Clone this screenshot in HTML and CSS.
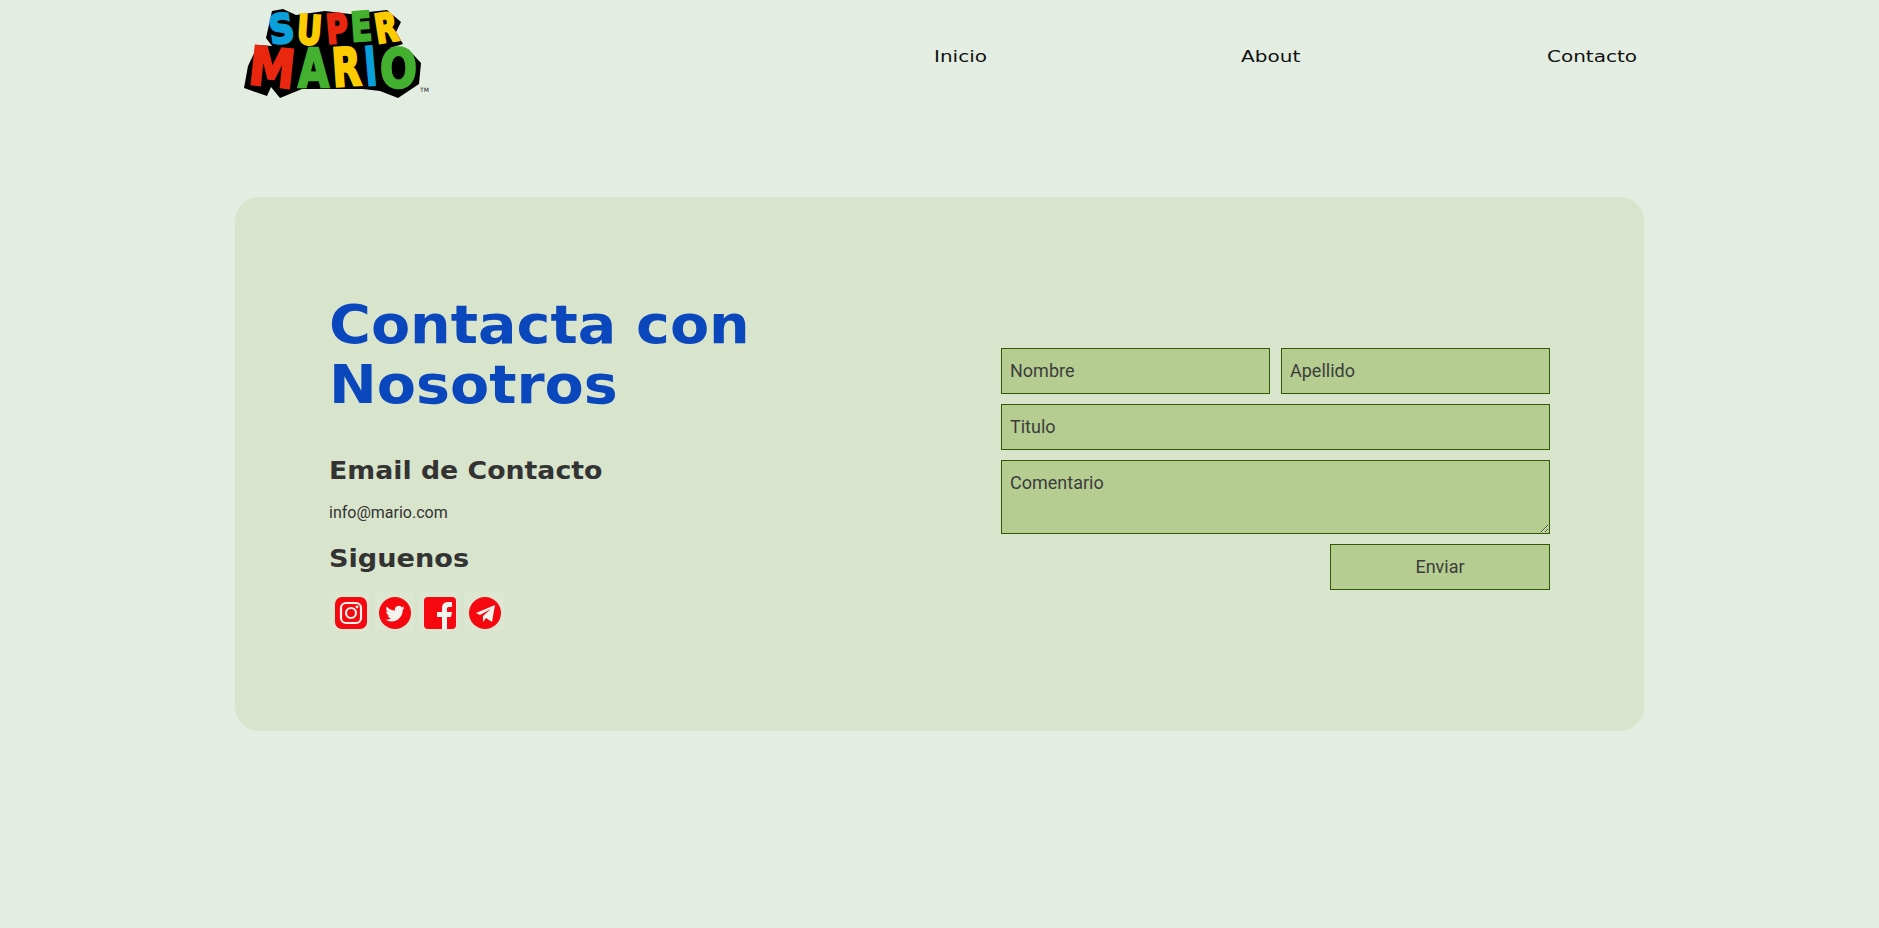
FILE: index.html
```html
<!DOCTYPE html>
<html>
  <head>
    <meta charset="utf-8" />
    <title>Contacto - Super Mario</title>
    <link rel="stylesheet" href="styles.css">
  </head>
  <body>
    <div id="main">
      <header class="top">
        <a class="logo" href="#">
          <svg width="205" height="110" viewBox="5 0 205 110">
            <polygon class="logo-back" points="42,11 53,9 66,15 95,11 120,14 157,10 171,22 166,32 173,44 160,48 178,49 191,63 189,84 168,98 150,91 133,89 110,89 72,89 50,98 41,87 37,96 14,88 18,66 28,45 42,46 36,38" />
            <g class="logo-front">
              <text class="blue" x="39" y="43" textLength="25" lengthAdjust="spacingAndGlyphs" transform="rotate(-8 50 30)">S</text>
              <text class="yellow" x="67" y="44" textLength="25" lengthAdjust="spacingAndGlyphs" transform="rotate(4 78 30)">U</text>
              <text class="red" x="96" y="43" textLength="22" lengthAdjust="spacingAndGlyphs" transform="rotate(-5 105 30)">P</text>
              <text class="green" x="121" y="41" textLength="21" lengthAdjust="spacingAndGlyphs" transform="rotate(-4 130 30)">E</text>
              <text class="yellow" x="145" y="42" textLength="23" lengthAdjust="spacingAndGlyphs" transform="rotate(-9 155 30)">R</text>
              <text class="big red" x="19" y="86" textLength="46" lengthAdjust="spacingAndGlyphs" transform="rotate(6 40 70)">M</text>
              <text class="big green" x="68" y="87" textLength="31" lengthAdjust="spacingAndGlyphs">A</text>
              <text class="big yellow" x="102" y="86" textLength="29" lengthAdjust="spacingAndGlyphs" transform="rotate(-4 115 70)">R</text>
              <text class="big blue" x="135" y="85" textLength="12" lengthAdjust="spacingAndGlyphs" transform="rotate(-5 140 70)">I</text>
              <text class="big green" x="150" y="87" textLength="37" lengthAdjust="spacingAndGlyphs">O</text>
            </g>
            <text class="tm" x="190" y="92">TM</text>
          </svg>
        </a>
        <nav class="menu">
          <a href="#">Inicio</a>
          <a href="#">About</a>
          <a href="#">Contacto</a>
        </nav>
      </header>

      <section class="card">
        <div class="info">
          <h1>Contacta con Nosotros</h1>
          <h3>Email de Contacto</h3>
          <p>info@mario.com</p>
          <h4>Siguenos</h4>
          <div class="social">
            <a href="#">
              <svg width="40" height="40" viewBox="0 0 40 40">
                <rect class="tile" width="40" height="40" />
                <rect class="red-fill" x="6" y="6" width="32" height="32" rx="7" />
                <rect class="white-line" x="12" y="12" width="20" height="20" rx="5" />
                <circle class="white-line" cx="22" cy="22" r="5" />
                <circle class="white-fill" cx="28" cy="16" r="1.4" />
              </svg>
            </a>
            <a href="#">
              <svg width="40" height="40" viewBox="0 0 40 40">
                <rect class="tile" width="40" height="40" />
                <circle class="red-fill" cx="21" cy="22" r="16" />
                <path class="white-fill" transform="translate(11.500 12.500) scale(1.2)" d="M5.026 15c6.038 0 9.341-5.003 9.341-9.334 0-.14 0-.282-.006-.422A6.685 6.685 0 0 0 16 3.542a6.658 6.658 0 0 1-1.889.518 3.301 3.301 0 0 0 1.447-1.817 6.533 6.533 0 0 1-2.087.793A3.286 3.286 0 0 0 7.875 6.03a9.325 9.325 0 0 1-6.767-3.429 3.289 3.289 0 0 0 1.018 4.382A3.323 3.323 0 0 1 .64 6.575v.045a3.288 3.288 0 0 0 2.632 3.218 3.203 3.203 0 0 1-.865.115 3.23 3.23 0 0 1-.614-.057 3.283 3.283 0 0 0 3.067 2.277A6.588 6.588 0 0 1 .78 13.58a6.32 6.32 0 0 1-.78-.045A9.344 9.344 0 0 0 5.026 15z" />
              </svg>
            </a>
            <a href="#">
              <svg width="40" height="40" viewBox="0 0 40 40">
                <rect class="tile" width="40" height="40" />
                <rect class="red-fill" x="5" y="6" width="32" height="32" rx="4" />
                <path class="white-fill" d="M23 38V26h-5v-5h5v-4c0-4 2.500-6 6-6h4v5h-3c-1.500 0-2 .7-2 2v3h5l-1 5h-4v12z" />
              </svg>
            </a>
            <a href="#">
              <svg width="40" height="40" viewBox="0 0 40 40">
                <rect class="tile" width="40" height="40" />
                <circle class="red-fill" cx="21" cy="22" r="16" />
                <path class="white-fill" d="M12 22l19-8-3 17-6-4-3 4v-6l8-7-11 6z" />
              </svg>
            </a>
          </div>
        </div>

        <form class="contact">
          <div class="row">
            <input type="text" placeholder="Nombre" />
            <input type="text" placeholder="Apellido" />
          </div>
          <input type="text" placeholder="Titulo" />
          <textarea placeholder="Comentario"></textarea>
          <div class="actions">
            <button type="button">Enviar</button>
          </div>
        </form>
      </section>
    </div>
  </body>
</html>
```

FILE: styles.css
```css
body {
  margin: 0;
  min-height: 928px;
  background-color: #e3ede1;
  color: #333;
  font: 16px Roboto, sans-serif;
}
#main {
  width: 1409px;
  margin: 0 auto;
}
.top {
  display: flex;
  justify-content: space-between;
  height: 110px;
  margin-bottom: 87px;
}
.logo {
  display: block;
  height: 110px;
}
.logo text {
  font-family: "DejaVu Sans", sans-serif;
  font-weight: bold;
  font-size: 40px;
}
.logo text.big {
  font-size: 53px;
}
.logo text.tm {
  font-size: 6px;
  font-weight: normal;
  fill: #222;
}
.logo-back {
  fill: #000;
}
.logo-front text {
  stroke-width: 2.500px;
  stroke-linejoin: miter;
}
.logo-front .blue { fill: #0b9fdc; stroke: #0b9fdc; }
.logo-front .yellow { fill: #fdcc00; stroke: #fdcc00; }
.logo-front .red { fill: #e9270f; stroke: #e9270f; }
.logo-front .green { fill: #43b02f; stroke: #43b02f; }
.menu {
  display: flex;
  justify-content: space-between;
  width: 703px;
  margin-right: 7px;
  padding-top: 47px;
  font: 16px "DejaVu Sans", sans-serif;
}
.menu a {
  display: block;
  height: 20px;
  color: #111;
  text-decoration: none;
  transform: scaleX(1.25);
}
.menu a:first-child {
  transform-origin: left;
}
.menu a:last-child {
  transform-origin: right;
}
.card {
  display: flex;
  justify-content: space-between;
  align-items: flex-start;
  height: 534px;
  box-sizing: border-box;
  padding: 94px;
  background-color: #d8e4cb;
  border-radius: 24px;
}
.info {
  width: 480px;
}
.info h1, .info h3, .info h4 {
  transform-origin: left;
}
.info h1 {
  margin: 4px 0 0;
  font: bold 53px/60px "DejaVu Sans", sans-serif;
  color: #0a47bd;
  transform: scaleX(1.077);
}
.info h3 {
  margin: 40px 0 0;
  font: bold 24px/32px "DejaVu Sans", sans-serif;
  transform: scaleX(1.115);
}
.info p {
  margin: 14px 0 0;
  line-height: 24px;
}
.info h4 {
  margin: 18px 0 0;
  font: bold 24px/32px "DejaVu Sans", sans-serif;
  transform: scaleX(1.13);
}
.social {
  display: flex;
  gap: 5px;
  margin-top: 16px;
}
.social a {
  display: block;
  height: 40px;
}
.tile { fill: #dbe7d1; }
.red-fill { fill: #f5080f; }
.white-fill { fill: #f3f3ee; }
.white-line {
  fill: none;
  stroke: #f3f3ee;
  stroke-width: 2.200px;
}
.contact {
  display: flex;
  flex-direction: column;
  gap: 10px;
  width: 549px;
  margin-top: 57px;
}
.row {
  display: flex;
  gap: 11px;
}
.row input {
  flex: 1;
  min-width: 0;
}
input, textarea, button {
  box-sizing: border-box;
  height: 46px;
  padding: 7px 8px 9px;
  border: 1px solid #2f5a00;
  border-radius: 0;
  background-color: #b5cd91;
  color: #3c3c3c;
  font: 18px Roboto, sans-serif;
}
input::placeholder, textarea::placeholder {
  color: #3c3c3c;
  opacity: 1;
}
textarea {
  display: block;
  height: 74px;
  width: 100%;
  padding-top: 11px;
}
.actions {
  display: flex;
  justify-content: flex-end;
}
button {
  width: 220px;
}
```
